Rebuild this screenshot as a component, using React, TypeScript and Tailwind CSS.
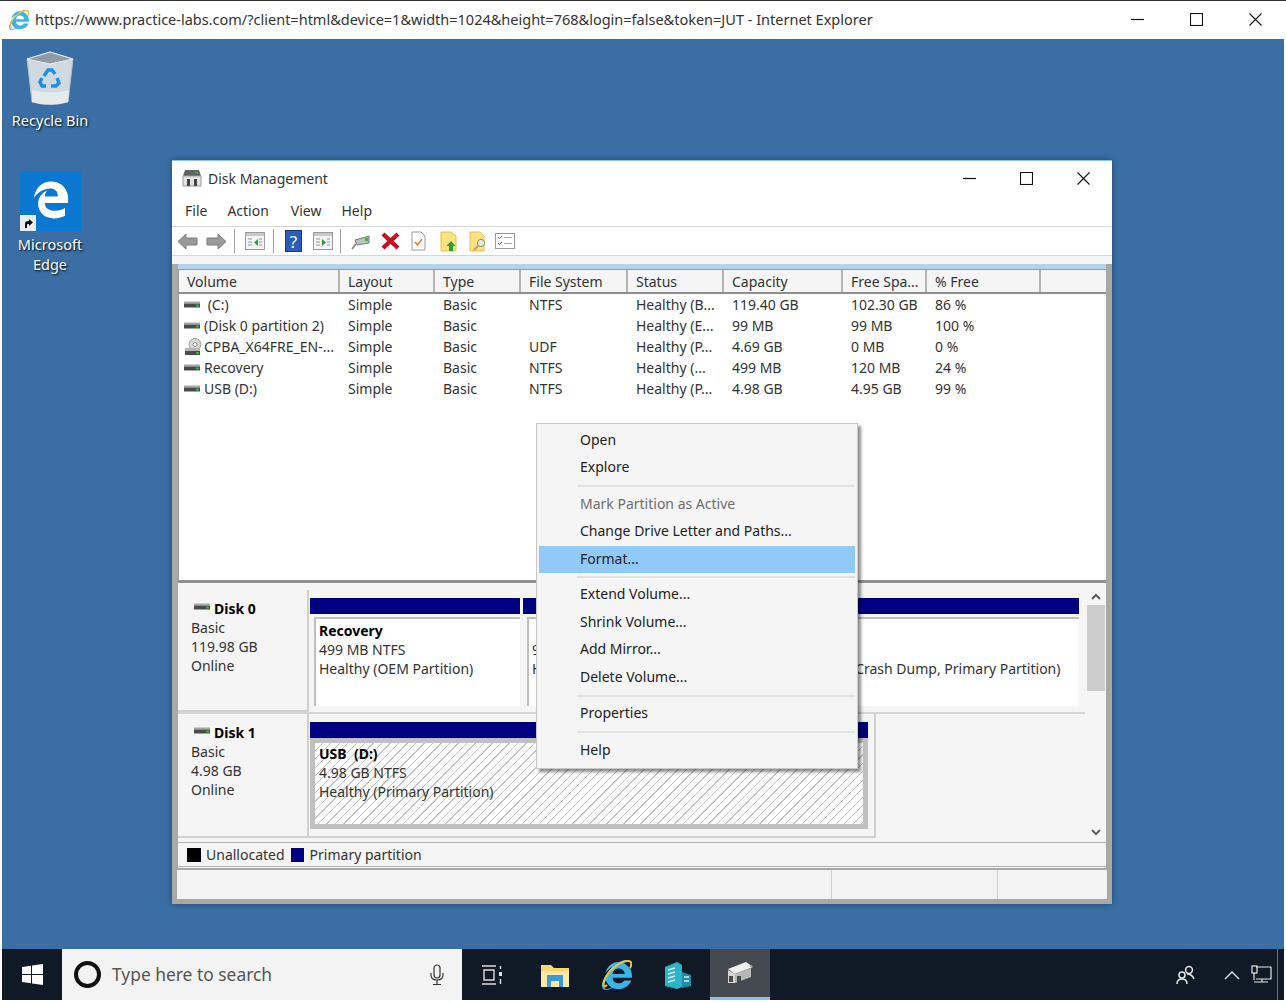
import { FaEdgeLegacy, FaInternetExplorer } from 'react-icons/fa6';

const volumes = [
  { icon: 'disk', name: '\u00a0(C:)', fs: 'NTFS', status: 'Healthy (B...', cap: '119.40 GB', free: '102.30 GB', pct: '86 %' },
  { icon: 'disk', name: '(Disk 0 partition 2)', fs: '', status: 'Healthy (E...', cap: '99 MB', free: '99 MB', pct: '100 %' },
  { icon: 'cd', name: 'CPBA_X64FRE_EN-...', fs: 'UDF', status: 'Healthy (P...', cap: '4.69 GB', free: '0 MB', pct: '0 %' },
  { icon: 'disk', name: 'Recovery', fs: 'NTFS', status: 'Healthy (...', cap: '499 MB', free: '120 MB', pct: '24 %' },
  { icon: 'disk', name: 'USB (D:)', fs: 'NTFS', status: 'Healthy (P...', cap: '4.98 GB', free: '4.95 GB', pct: '99 %' },
];

const columns = [
  { label: 'Volume', w: 'w-[161px]' },
  { label: 'Layout', w: 'w-[95px]' },
  { label: 'Type', w: 'w-[86px]' },
  { label: 'File System', w: 'w-[107px]' },
  { label: 'Status', w: 'w-[96px]' },
  { label: 'Capacity', w: 'w-[119px]' },
  { label: 'Free Spa...', w: 'w-[84px]' },
  { label: '% Free', w: 'w-[114px]' },
];

const DiskIcon = ({ className = '' }: { className?: string }) => (
  <svg width="17" height="8" viewBox="0 0 17 8" className={className}>
    <rect x="0" y="0.5" width="16" height="2" fill="#a8a8a8" />
    <rect x="0" y="2.5" width="16" height="4" fill="#4a4a4a" />
    <rect x="12" y="3.5" width="3" height="2" fill="#3fae3a" />
  </svg>
);

const CdIcon = () => (
  <svg width="18" height="18" viewBox="0 0 18 18">
    <circle cx="11" cy="6.5" r="6" fill="#d8d8d8" stroke="#9a9a9a" />
    <circle cx="11" cy="6.5" r="2" fill="#fff" stroke="#8a8a8a" />
    <rect x="1" y="10" width="15" height="3" fill="#b5b5b5" />
    <rect x="1" y="13" width="15" height="4" fill="#4a4a4a" />
    <rect x="12" y="14" width="3" height="2" fill="#3fae3a" />
  </svg>
);

const WinControls = ({ gap }: { gap: string }) => (
  <div className={`flex items-center ${gap}`}>
    <svg width="13" height="13" viewBox="0 0 13 13"><path d="M0 6.5h13" stroke="#111" strokeWidth="1.2" /></svg>
    <svg width="13" height="13" viewBox="0 0 13 13"><rect x="0.5" y="0.5" width="12" height="12" fill="none" stroke="#111" strokeWidth="1.1" /></svg>
    <svg width="13" height="13" viewBox="0 0 13 13"><path d="M0.5 0.5l12 12M12.5 0.5l-12 12" stroke="#111" strokeWidth="1.1" /></svg>
  </div>
);

const RecycleBin = () => (
  <svg width="50" height="56" viewBox="0 0 50 56">
    <path d="M2 9L25 2l23 7-5 43q-18 5-36 0z" fill="#cfd9e2" stroke="#aebbc6" />
    <path d="M2 9L25 2l23 7-23 5z" fill="#8f9ba6" stroke="#e8eef2" />
    <path d="M7 40q18 5 37 0l-1 12q-18 5-36 0z" fill="#e6eaed" />
    <g fill="none" stroke="#1f8fe0" strokeWidth="3.4">
      <path d="M19 26l4-6h4l3 4" />
      <path d="M32 28l2 5-3 3h-5" />
      <path d="M21 36h-4l-2-4 2-4" />
    </g>
  </svg>
);

const EdgeTile = () => (
  <div className="relative w-[61px] h-[60px] bg-[#0a78d0] flex items-center justify-center">
    <FaEdgeLegacy className="text-white text-[38px] mt-[-3px] ml-[2px]" />
    <div className="absolute left-0 bottom-0 w-[16px] h-[16px] bg-[#e8eef3] flex items-center justify-center">
      <svg width="12" height="12" viewBox="0 0 12 12"><path d="M3 11V7q0-3 3-3h1V2l4 3.5L7 9V7H6q-1 0-1 1v3z" fill="#111" /></svg>
    </div>
  </div>
);

// the fa glyph has no gold ring, so it is drawn over it
const IeLogo = ({ size }: { size: number }) => (
  <div className="relative shrink-0" style={{ width: size, height: size }}>
    <FaInternetExplorer size={size} className="text-[#3cb4e8]" />
    <svg viewBox="0 0 30 30" className="absolute inset-0 w-full h-full" fill="none" stroke="#f2c230" strokeWidth="2">
      <path d="M5 25C1 29 0 24 4 17 9 8 19 1 26 1c4 0 4 3 2 7" />
    </svg>
  </div>
);

const DesktopIcon = ({ icon, label, labelClass, className = '' }: { icon: React.ReactNode; label: string; labelClass: string; className?: string }) => (
  <div className={`absolute flex flex-col items-center w-[90px] ${className}`}>
    {icon}
    <div className={`text-white text-[14.5px] leading-[20px] text-center [text-shadow:1px_1px_2px_#000] ${labelClass}`}>{label}</div>
  </div>
);

const Sep = () => <div className="w-[1px] h-[24px] bg-[#a0a0a0]" />;

const PanelIcon = ({ right }: { right?: boolean }) => (
  <svg width="20" height="18" viewBox="0 0 20 18">
    <rect x="0.5" y="0.5" width="19" height="17" fill="#f4f4f4" stroke="#9a9a9a" />
    <rect x="1" y="1" width="18" height="3" fill="#c9c9c9" />
    <path d="M3 7h4M3 10h4M3 13h4M14 7h3M14 10h3M14 13h3" stroke="#8a9aa8" />
    {right ? <path d="M9 7l4 3.5-4 3.5z" fill="#2f9e38" /> : <path d="M13 7l-4 3.5 4 3.5z" fill="#2f9e38" />}
  </svg>
);

const Toolbar = () => (
  <div className="h-[30px] bg-white border-y border-[#d6d6d6] pl-[5px] flex items-center shrink-0">
    <svg width="21" height="17" viewBox="0 0 21 17"><path d="M9 1L1 8.5 9 16v-4h11V5H9z" fill="#9a9a9a" stroke="#7d7d7d" /></svg>
    <svg width="21" height="17" viewBox="0 0 21 17" className="ml-[8px]"><path d="M12 1l8 7.5L12 16v-4H1V5h11z" fill="#9a9a9a" stroke="#7d7d7d" /></svg>
    <div className="ml-[7px]"><Sep /></div>
    <div className="ml-[10px]"><PanelIcon /></div>
    <div className="ml-[8px]"><Sep /></div>
    <div className="ml-[11px] w-[17px] h-[22px] bg-[#2d5bb8] border border-[#1c3478] flex items-center justify-center text-white text-[17px] leading-none">?</div>
    <div className="ml-[11px]"><PanelIcon right /></div>
    <div className="ml-[7px]"><Sep /></div>
    <svg width="20" height="18" viewBox="0 0 20 18" className="ml-[10px]">
      <path d="M4 8L18 4v7L6 13z" fill="#b8c4c0" stroke="#777" />
      <rect x="14" y="6" width="3" height="3" fill="#3fae3a" />
      <path d="M5 12L1 17" stroke="#8a8a8a" strokeWidth="2" />
    </svg>
    <svg width="19" height="18" viewBox="0 0 19 18" className="ml-[10px]"><path d="M2 2l15 14M17 2L2 16" stroke="#c8101e" strokeWidth="4.4" /></svg>
    <svg width="15" height="20" viewBox="0 0 15 20" className="ml-[11px]">
      <path d="M1 1h9l4 4v14H1z" fill="#fff" stroke="#9a9a9a" />
      <path d="M4 11l2.5 3L11 8" fill="none" stroke="#e07a3a" strokeWidth="1.6" />
    </svg>
    <svg width="17" height="21" viewBox="0 0 17 21" className="ml-[14px]">
      <path d="M1 1h10l5 4v15H1z" fill="#fbe27c" stroke="#dcc25a" />
      <path d="M11 10l4.5 5H13v5H9v-5H6.5z" fill="#2f9e38" />
    </svg>
    <svg width="19" height="21" viewBox="0 0 19 21" className="ml-[12px]">
      <path d="M1 1h10l4 4v15H1z" fill="#fbe27c" stroke="#dcc25a" />
      <circle cx="12" cy="12" r="3.6" fill="#dbe9f2" stroke="#9a8a5a" />
      <path d="M9 15l-4 4" stroke="#b8a670" strokeWidth="2" />
    </svg>
    <svg width="20" height="16" viewBox="0 0 20 16" className="ml-[7px]">
      <rect x="0.5" y="0.5" width="19" height="15" fill="#fff" stroke="#9a9a9a" />
      <path d="M3 4l1.5 1.5L7 3M3 10l1.5 1.5L7 9" fill="none" stroke="#2f6fc0" />
      <path d="M9 4.5h8M9 10.5h8" stroke="#a8a8a8" />
    </svg>
  </div>
);

const VolumeList = () => (
  <div className="h-[311px] bg-white border-t border-l border-[#9a9a9a] flex flex-col shrink-0">
    <div className="h-[24px] flex border-b-[2px] border-[#8f8f8f] bg-[#f5f5f5] shrink-0">
      {columns.map((c) => (
        <div key={c.label} className={`${c.w} pl-[8px] border-r-[2px] border-[#b4b4b4] text-[14px] leading-[23px] text-[#333]`}>{c.label}</div>
      ))}
    </div>
    <div>
      {volumes.map((v) => (
        <div key={v.name} className="h-[21px] flex text-[14px] leading-[21px] text-[#333]">
          <div className="w-[161px] flex items-center pl-[5px]">
            <div className="w-[20px] flex items-center shrink-0">{v.icon === 'cd' ? <CdIcon /> : <DiskIcon />}</div>
            <span className="whitespace-pre">{v.name}</span>
          </div>
          <div className="w-[95px] pl-[8px]">Simple</div>
          <div className="w-[86px] pl-[8px]">Basic</div>
          <div className="w-[107px] pl-[8px]">{v.fs}</div>
          <div className="w-[96px] pl-[8px]">{v.status}</div>
          <div className="w-[119px] pl-[8px]">{v.cap}</div>
          <div className="w-[84px] pl-[8px]">{v.free}</div>
          <div className="w-[114px] pl-[8px]">{v.pct}</div>
        </div>
      ))}
    </div>
  </div>
);

const DiskLabel = ({ name, size }: { name: string; size: string }) => (
  <div className="w-[131px] h-full shrink-0 bg-[#f5f5f5] border-r-[2px] border-b-[2px] border-[#d0d0d0] pl-[13px] pt-[9px] text-[14px] leading-[19px] text-[#333]">
    <div className="flex items-center pl-[3px] font-bold text-black">
      <DiskIcon className="mr-[3px] mb-[4px]" />{name}
    </div>
    <div>Basic</div>
    <div>{size}</div>
    <div>Online</div>
  </div>
);

const Partition = ({ title, lines, className }: { title: string; lines: string[]; className: string }) => (
  <div className={`flex flex-col ${className}`}>
    <div className="h-[16px] bg-[#000080] shrink-0" />
    <div className="h-[89px] mt-[3px] ml-[4px] bg-white border-t-[2px] border-l-[2px] border-[#c0c0c0] pl-[3px] pt-[2px] text-[14px] leading-[19px] text-[#333] whitespace-nowrap overflow-hidden">
      <div className="font-bold text-black h-[19px]">{title}</div>
      {lines.map((l) => <div key={l}>{l}</div>)}
    </div>
  </div>
);

const DiskPane = () => (
  <div className="relative h-[252px] mt-[7px] flex shrink-0">
    <div className="flex-1 flex flex-col">
      <div className="h-[124px] flex border-b-[2px] border-[#d4d4d4]">
        <DiskLabel name="Disk 0" size="119.98 GB" />
        <div className="flex-1 flex pt-[8px] pl-[1px] pb-[5px] gap-[3px] bg-[#f5f5f5]">
          <Partition title="Recovery" lines={['499 MB NTFS', 'Healthy (OEM Partition)']} className="w-[210px]" />
          <Partition title="" lines={['99 MB NTFS', 'Healthy (EFI System Partition)']} className="w-[157px]" />
          <Partition title="(C:)" lines={['119.40 GB NTFS', 'Healthy (Boot, Page File, Crash Dump, Primary Partition)']} className="w-[396px]" />
        </div>
      </div>
      <div className="h-[124px] flex">
        <DiskLabel name="Disk 1" size="4.98 GB" />
        <div className="w-[567px] pt-[8px] pl-[1px] pr-[6px] pb-[7px] bg-[#f5f5f5] border-r-[2px] border-b-[2px] border-[#d0d0d0] flex flex-col">
          <div className="h-[16px] bg-[#000080] shrink-0" />
          <div className="flex-1 border-[5px] border-[#c0c0c0] pl-[4px] pt-[1px] text-[14px] leading-[19px] text-[#333] whitespace-nowrap bg-[repeating-linear-gradient(135deg,#ffffff_0,#ffffff_5px,#c4c4c4_5px,#c4c4c4_6px)]">
            <div className="font-bold text-black">USB&nbsp;&nbsp;(D:)</div>
            <div>4.98 GB NTFS</div>
            <div>Healthy (Primary Partition)</div>
          </div>
        </div>
      </div>
    </div>
    <div className="w-[21px] flex flex-col items-center shrink-0 bg-[#f5f5f5]">
      <svg width="12" height="8" viewBox="0 0 12 8" className="mt-[3px]"><path d="M2 6l4-4 4 4" fill="none" stroke="#606060" strokeWidth="2" /></svg>
      <div className="w-[18px] h-[86px] mt-[4px] bg-[#cdcdcd]" />
      <svg width="12" height="8" viewBox="0 0 12 8" className="mt-auto mb-[6px]"><path d="M2 2l4 4 4-4" fill="none" stroke="#606060" strokeWidth="2" /></svg>
    </div>
  </div>
);

const menuGroups = [
  ['Open', 'Explore'],
  ['Mark Partition as Active', 'Change Drive Letter and Paths...', 'Format...'],
  ['Extend Volume...', 'Shrink Volume...', 'Add Mirror...', 'Delete Volume...'],
  ['Properties'],
  ['Help'],
];

const ContextMenu = () => (
  <div className="absolute left-[534px] top-[384px] w-[322px] h-[346px] bg-[#f5f5f5] border border-[#c8c8c8] shadow-[3px_3px_3px_rgba(0,0,0,0.45)] px-[2px] pt-[2.5px] text-[14px] text-[#222]">
    {menuGroups.map((group, i) => (
      <div key={group[0]}>
        {i > 0 && (
          <div className={`${i === 2 ? 'h-[8px]' : 'h-[9px]'} flex items-center pl-[38px]`}>
            <div className="w-full h-[2px] bg-[#e2e2e2]" />
          </div>
        )}
        {group.map((item) => (
          <div
            key={item}
            className={`h-[27.5px] pl-[41px] leading-[26px] ${item === 'Format...' ? 'bg-[#91c9f7]' : ''} ${item === 'Mark Partition as Active' ? 'text-[#6d6d6d]' : ''}`}
          >
            {item}
          </div>
        ))}
      </div>
    ))}
  </div>
);

const DiskWindow = () => (
  <div className="absolute left-[170px] top-[121px] w-[940px] h-[744px] bg-[#a8a8a8] border-t border-[#8fc0e8] shadow-[0_0_6px_rgba(0,0,0,0.35)] flex flex-col">
    <div className="bg-white h-[65px] pl-[10px] pr-[22px] shrink-0">
      <div className="h-[36px] pb-[2px] flex items-center">
        <svg width="20" height="18" viewBox="0 0 20 18">
          <path d="M3 1h14l2 6H1z" fill="#5a6460" />
          <rect x="13" y="2.5" width="3" height="2" fill="#3fae3a" />
          <path d="M1 7h18v10H1z" fill="#e2e2e2" stroke="#9a9a9a" />
          <rect x="5" y="10" width="3" height="7" fill="#444" />
          <rect x="12" y="10" width="3" height="7" fill="#444" />
        </svg>
        <span className="ml-[6px] text-[14px] text-[#333]">Disk Management</span>
        <div className="ml-auto"><WinControls gap="gap-[44px]" /></div>
      </div>
      <div className="h-[27px] flex items-center pl-[3px] gap-[20px] text-[14px] text-[#333]">
        <span>File</span><span>Action</span><span className="ml-[2px]">View</span><span>Help</span>
      </div>
    </div>
    <Toolbar />
    <div className="h-[8px] bg-[#f5f5f5] shrink-0" />
    <div className="h-[5px] bg-[#b7d2ea] mx-[6px] shrink-0" />
    <div className="flex-1 mx-[6px] bg-[#f5f5f5] flex flex-col min-h-0">
      <VolumeList />
      <div className="h-[3px] bg-[#8f8f8f] shrink-0" />
      <DiskPane />
      <div className="h-[25px] bg-[#f5f5f5] border-y border-[#b0b0b0] flex items-center pl-[9px] text-[14px] text-[#333] shrink-0">
        <span className="w-[14px] h-[14px] bg-black" />
        <span className="ml-[5px]">Unallocated</span>
        <span className="ml-[6px] w-[13px] h-[14px] bg-[#000080]" />
        <span className="ml-[6px]">Primary partition</span>
      </div>
    </div>
    <div className="h-[29px] mt-[2px] mb-[5px] mx-[5px] bg-[#f3f3f3] flex shrink-0">
      <div className="w-[655px] border-r border-[#d0d0d0]" />
      <div className="w-[166px] border-r border-[#d0d0d0]" />
    </div>
  </div>
);

const Taskbar = () => (
  <div className="h-[51px] mx-[2px] bg-[#101a26] flex items-stretch shrink-0">
    <div className="w-[60px] flex items-center justify-center">
      <svg width="21" height="21" viewBox="0 0 21 21" fill="#fff">
        <path d="M0 3l9-1.3V10H0zM10 1.5L21 0v10H10zM0 11h9v8.3L0 18zM10 11h11v10l-11-1.5z" />
      </svg>
    </div>
    <div className="w-[400px] bg-[#f3f3f3] flex items-center pl-[12px] pr-[17px]">
      <div className="w-[27px] h-[27px] rounded-full border-[4px] border-[#111]" />
      <span className="ml-[11px] text-[17.4px] text-[#555]">Type here to search</span>
      <svg width="16" height="22" viewBox="0 0 16 22" className="ml-auto" fill="none" stroke="#333" strokeWidth="1.2">
        <rect x="5" y="1" width="6" height="13" rx="3" />
        <path d="M2 9v2q0 5 6 5t6-5V9M8 16v4M4 20.5h8" />
      </svg>
    </div>
    <div className="w-[60px] flex items-center justify-center">
      <svg width="22" height="20" viewBox="0 0 22 20" fill="none" stroke="#ddd" strokeWidth="1.4">
        <path d="M1 1h14M1 19h14M3 5h10v10H3z" />
        <rect x="18" y="7" width="3" height="4" fill="#ddd" stroke="none" />
        <path d="M19.5 1v3M19.5 14v5" />
      </svg>
    </div>
    <div className="w-[66px] flex items-center justify-center">
      <svg width="28" height="24" viewBox="0 0 28 24">
        <path d="M0 2h10l3 3h15v19H0z" fill="#fbd66f" />
        <path d="M0 8h28v16H0z" fill="#fde9a6" />
        <path d="M6 12h16v12h-4v-6h-8v6H6z" fill="#3a9bd8" />
      </svg>
    </div>
    <div className="w-[58px] flex items-center justify-center"><IeLogo size={30} /></div>
    <div className="w-[64px] flex items-center justify-center">
      <svg width="28" height="28" viewBox="0 0 28 28">
        <path d="M1 6l12-5 5 3v22l-5 2-12-3z" fill="#2bb3c9" />
        <path d="M18 11l9 3v11l-9 2z" fill="#1d8ea6" />
        <path d="M4 9l7-2M4 13l7-2M4 17l7-2M4 21l7-2M20 16h5M20 20h5" stroke="#d6f4f8" strokeWidth="1.4" />
      </svg>
    </div>
    <div className="w-[60px] bg-[#444a50] border-b-[3px] border-[#8cc0e4] flex items-center justify-center">
      <svg width="28" height="26" viewBox="0 0 28 26">
        <path d="M2 9l18-7 7 5-18 7z" fill="#f0f0f0" />
        <rect x="24" y="5" width="2" height="2" fill="#9a9a9a" />
        <path d="M2 10l7 4v9H2z" fill="#d6d6d6" />
        <path d="M9 14l16-6v9l-16 6z" fill="#b8b8b8" />
        <rect x="3" y="16" width="4" height="6" fill="#4a4a4a" />
        <rect x="11" y="16" width="4" height="6" fill="#4a4a4a" />
      </svg>
    </div>
    <div className="ml-auto flex items-center pr-[6px]">
      <svg width="20" height="20" viewBox="0 0 20 20" fill="none" stroke="#e6e6e6" strokeWidth="1.5">
        <circle cx="13" cy="5" r="3.4" />
        <circle cx="6" cy="10" r="3" />
        <path d="M1 19q0-5 5-5t5 5M11 9q5 0 7 5" />
      </svg>
      <svg width="16" height="10" viewBox="0 0 16 10" className="ml-[28px]" fill="none" stroke="#e6e6e6" strokeWidth="1.4"><path d="M1 9l7-7 7 7" /></svg>
      <svg width="21" height="20" viewBox="0 0 21 20" className="ml-[11px]" fill="none" stroke="#e6e6e6" strokeWidth="1.2">
        <path d="M5 2h15v12H5M3 17h14M11 14v3" />
        <rect x="1" y="1" width="5" height="7" />
        <path d="M3 8v7" />
      </svg>
      <div className="w-[1px] h-[51px] bg-[#6a6f75] ml-[5px]" />
    </div>
  </div>
);

export default function App() {
  return (
    <div className="relative w-[1286px] h-[1003px] overflow-hidden bg-white flex flex-col font-['Noto_Sans',sans-serif]">
      <div className="h-[39px] border-t border-[#333] pl-[9px] pr-[24px] flex items-center shrink-0">
        <IeLogo size={20} />
        <span className="ml-[6px] text-[14.5px] text-[#333] whitespace-nowrap">
          https://www.practice-labs.com/?client=html&amp;device=1&amp;width=1024&amp;height=768&amp;login=false&amp;token=JUT - Internet Explorer
        </span>
        <div className="ml-auto mt-[-2px]"><WinControls gap="gap-[46px]" /></div>
      </div>
      <div className="relative flex-1 mx-[2px] bg-[#3a6ea5]">
        <DesktopIcon icon={<RecycleBin />} label="Recycle Bin" labelClass="mt-[4px]" className="left-[3px] top-[11px]" />
        <DesktopIcon icon={<EdgeTile />} label="Microsoft Edge" labelClass="mt-[3px]" className="left-[3px] top-[132px]" />
        <DiskWindow />
        <ContextMenu />
      </div>
      <Taskbar />
      <div className="h-[3px] shrink-0 bg-white" />
    </div>
  );
}
